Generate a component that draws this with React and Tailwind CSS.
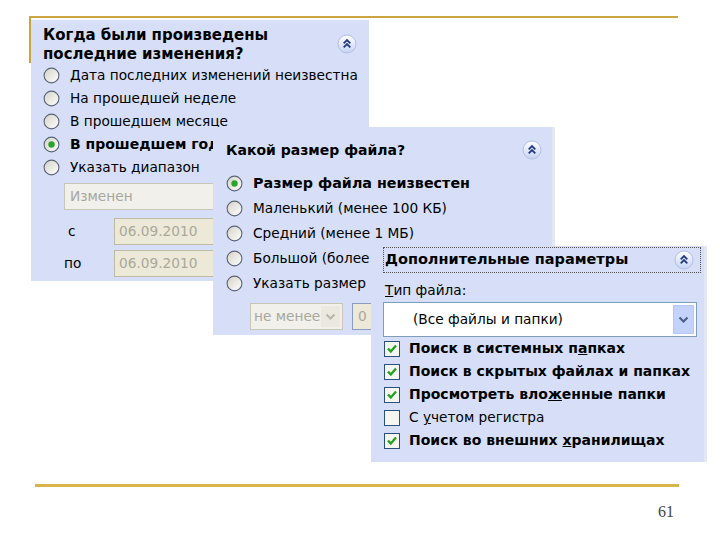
import React from "react";

function Radio({ on }) {
  return (
    <svg width="17" height="17" viewBox="0 0 17 17" className="shrink-0">
      <defs>
        <linearGradient id="rgrad" x1="0" y1="0" x2="1" y2="1">
          <stop offset="0" stopColor="#d4d2c6" />
          <stop offset="1" stopColor="#ffffff" />
        </linearGradient>
      </defs>
      <circle cx="8.5" cy="8.5" r="7.4" fill="url(#rgrad)" stroke="#5b6478" strokeWidth="1.1" />
      {on && <circle cx="8.5" cy="8.5" r="3.2" fill="#2aa52a" />}
    </svg>
  );
}

function Check({ on }) {
  return (
    <svg width="16" height="16" viewBox="0 0 16 16" className="shrink-0">
      <rect x="0.5" y="0.5" width="15" height="15" fill="#f7f7f2" stroke="#2b4f7e" />
      {on && <path d="M4 7.5 L6.8 10.5 L12 4.5" stroke="#22a322" strokeWidth="2.4" fill="none" />}
    </svg>
  );
}

function Collapse() {
  return (
    <svg width="20" height="20" viewBox="0 0 20 20" className="shrink-0">
      <defs>
        <linearGradient id="cgrad" x1="0" y1="0" x2="0" y2="1">
          <stop offset="0" stopColor="#ffffff" />
          <stop offset="1" stopColor="#c6d2f4" />
        </linearGradient>
      </defs>
      <circle cx="10" cy="10" r="9" fill="url(#cgrad)" stroke="#b3c0e4" />
      <path d="M6.7 9.3 L10 6 L13.3 9.3 M6.7 13.3 L10 10 L13.3 13.3" stroke="#1f3b80" strokeWidth="1.8" fill="none" />
    </svg>
  );
}

function Chevron({ color }) {
  return (
    <svg width="11" height="8" viewBox="0 0 11 8">
      <path d="M1.5 1.5 L5.5 5.5 L9.5 1.5" stroke={color} strokeWidth="2.2" fill="none" />
    </svg>
  );
}

const font = "font-['DejaVu_Sans',Tahoma,sans-serif]";

export default function App() {
  return (
    <div className={`relative w-[720px] h-[540px] bg-white overflow-hidden text-black ${font}`}>
      {/* slide frame */}
      <div className="ml-[29px] mt-[16px] w-[649px] h-[47px] border-t-2 border-l-2 border-[#c9a640]" />
      <div className="ml-[35px] mt-[421px] w-[644px] h-[3px] bg-[#d7b54c]" />
      <div className="ml-[658px] mt-[16px] text-[16px] leading-[17px] text-[#444] font-['Liberation_Serif',serif]">61</div>

      {/* panel 1: date */}
      <div className="absolute left-[31px] top-[20px] w-[338px] h-[261px] bg-[#d6dff7] text-[13.7px]">
        <div className="flex justify-between pl-[12px] pr-[12px] pt-[6px]">
          <div className="font-bold text-[15px] leading-[19px]">
            Когда были произведены
            <br />
            последние изменения?
          </div>
          <div className="mt-[8px]">
            <Collapse />
          </div>
        </div>
        <div className="flex flex-col pl-[12px]">
          {[
            ["Дата последних изменений неизвестна", false],
            ["На прошедшей неделе", false],
            ["В прошедшем месяце", false],
            ["В прошедшем году", true],
            ["Указать диапазон", false],
          ].map(([t, on]) => (
            <div key={t} className="flex items-center gap-[10px] h-[23px] whitespace-nowrap">
              <Radio on={on} />
              <span className={on ? "font-bold text-[14px]" : ""}>{t}</span>
            </div>
          ))}
        </div>
        <div className="ml-[33px] mt-[4px] w-[176px] h-[27px] flex items-center justify-between border border-[#c8c6b8] bg-[#f1f0ea] pl-[5px] pr-[2px] text-[#a8a79e]">
          <span>Изменен</span>
          <div className="w-[18px] h-[21px] bg-[#ebe9df] flex items-center justify-center">
            <Chevron color="#b9b8ad" />
          </div>
        </div>
        <div className="flex items-center mt-[8px] h-[27px]">
          <span className="ml-[37px] w-[46px]">с</span>
          <div className="w-[130px] h-[27px] border border-[#bdbaa6] bg-[#ece9d8] pl-[4px] flex items-center text-[#aaa899]">06.09.2010</div>
        </div>
        <div className="flex items-center mt-[5px] h-[27px]">
          <span className="ml-[33px] w-[50px]">по</span>
          <div className="w-[130px] h-[27px] border border-[#bdbaa6] bg-[#ece9d8] pl-[4px] flex items-center text-[#aaa899]">06.09.2010</div>
        </div>
      </div>

      {/* panel 2: size */}
      <div className="absolute left-[213px] top-[127px] w-[342px] h-[208px] bg-[#d6dff7] border-r-[3px] border-[#e3e7f4] text-[13.7px]">
        <div className="flex items-center justify-between h-[22px] mt-[12px] pl-[13px] pr-[10px]">
          <span className="font-bold text-[14px]">Какой размер файла?</span>
          <Collapse />
        </div>
        <div className="flex flex-col pl-[13px] mt-[10px]">
          {[
            ["Размер файла неизвестен", true],
            ["Маленький (менее 100 КБ)", false],
            ["Средний (менее 1 МБ)", false],
            ["Большой (более 1 МБ)", false],
            ["Указать размер (в КБ)", false],
          ].map(([t, on]) => (
            <div key={t} className="flex items-center gap-[10px] h-[25px] whitespace-nowrap">
              <Radio on={on} />
              <span className={on ? "font-bold text-[14.3px]" : ""}>{t}</span>
            </div>
          ))}
        </div>
        <div className="flex items-center mt-[7px] h-[27px] pl-[37px] gap-[9px]">
          <div className="w-[93px] h-[27px] flex items-center justify-between border border-[#c8c6b8] bg-[#f1f0ea] pl-[3px] pr-[2px] text-[#a8a79e] overflow-hidden whitespace-nowrap">
            <span className="w-[66px] overflow-hidden">не менее</span>
            <div className="w-[19px] h-[21px] bg-[#ebe9df] flex items-center justify-center shrink-0">
              <Chevron color="#b9b8ad" />
            </div>
          </div>
          <div className="w-[60px] h-[27px] border border-[#8a9ac0] bg-[#ece9d8] pl-[5px] flex items-center text-[#aaa899]">0</div>
        </div>
      </div>

      {/* panel 3: more options */}
      <div className="absolute left-[371px] top-[246px] w-[336px] h-[216px] bg-[#d6dff7] border-r-[3px] border-[#e3e7f4] text-[13.7px]">
        <div className="mt-[1px] ml-[12px] w-[318px] h-[26px] border border-dotted border-[#505050] flex items-center justify-between pl-[1px] pr-[6px]">
          <span className="font-bold text-[14.5px]">Дополнительные параметры</span>
          <Collapse />
        </div>
        <div className="ml-[14px] mt-[7px] h-[20px] leading-[20px]">
          <span className="underline">Т</span>ип файла:
        </div>
        <div className="ml-[12px] mt-[2px] w-[314px] h-[35px] border border-[#7f9db9] bg-white flex items-center justify-between pl-[29px] pr-[2px]">
          <span>(Все файлы и папки)</span>
          <div className="w-[21px] h-[29px] bg-[#c3d3fd] border border-[#b4c8f6] flex items-center justify-center">
            <Chevron color="#4d6185" />
          </div>
        </div>
        <div className="flex flex-col pl-[13px] text-[14px]">
          <div className="flex items-center gap-[9px] h-[23px] whitespace-nowrap font-bold">
            <Check on />
            <span>
              Поиск в системных п<span className="underline">а</span>пках
            </span>
          </div>
          <div className="flex items-center gap-[9px] h-[23px] whitespace-nowrap font-bold">
            <Check on />
            <span>Поиск в скрытых файлах и папках</span>
          </div>
          <div className="flex items-center gap-[9px] h-[23px] whitespace-nowrap font-bold">
            <Check on />
            <span>
              Просмотреть вло<span className="underline">ж</span>енные папки
            </span>
          </div>
          <div className="flex items-center gap-[9px] h-[23px] whitespace-nowrap text-[13.7px]">
            <Check />
            <span>
              С <span className="underline">у</span>четом регистра
            </span>
          </div>
          <div className="flex items-center gap-[9px] h-[23px] whitespace-nowrap font-bold">
            <Check on />
            <span>
              Поиск во внешних <span className="underline">х</span>ранилищах
            </span>
          </div>
        </div>
      </div>
    </div>
  );
}
